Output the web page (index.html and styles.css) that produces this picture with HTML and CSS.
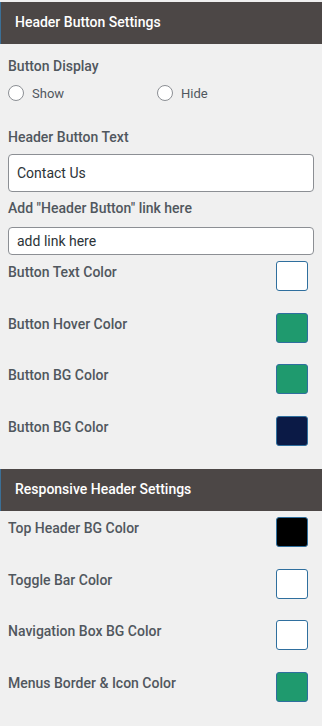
FILE: index.html
```html
<!DOCTYPE html>
<html lang="en">
<head>
<meta charset="utf-8">
<title>Header Button Settings</title>
<link rel="stylesheet" href="styles.css">
</head>
<body>
<div class="panel">
  <div class="section-title">Header Button Settings</div>
  <div class="section-body">
    <div class="field-label first">Button Display</div>
    <div class="radio-group">
      <label class="radio"><span class="radio-circle"></span><span class="radio-text">Show</span></label>
      <label class="radio"><span class="radio-circle"></span><span class="radio-text">Hide</span></label>
    </div>
    <div class="field-label spaced">Header Button Text</div>
    <div class="text-input tall">Contact Us</div>
    <div class="field-label tight">Add "Header Button" link here</div>
    <div class="text-input short">add link here</div>
    <div class="color-list top">
      <div class="color-row"><span class="color-label">Button Text Color</span><span class="swatch white"></span></div>
      <div class="color-row"><span class="color-label">Button Hover Color</span><span class="swatch green"></span></div>
      <div class="color-row"><span class="color-label">Button BG Color</span><span class="swatch green"></span></div>
      <div class="color-row"><span class="color-label">Button BG Color</span><span class="swatch navy"></span></div>
    </div>
  </div>
  <div class="section-title second">Responsive Header Settings</div>
  <div class="section-body">
    <div class="color-list second-list">
      <div class="color-row"><span class="color-label">Top Header BG Color</span><span class="swatch black"></span></div>
      <div class="color-row"><span class="color-label">Toggle Bar Color</span><span class="swatch white"></span></div>
      <div class="color-row"><span class="color-label">Navigation Box BG Color</span><span class="swatch white"></span></div>
      <div class="color-row"><span class="color-label">Menus Border &amp; Icon Color</span><span class="swatch green"></span></div>
    </div>
  </div>
</div>
</body>
</html>
```
FILE: styles.css
```css
html, body {
  margin: 0;
  padding: 0;
  background: #f0f0f0;
}
body {
  font-family: Roboto, "Liberation Sans", sans-serif;
  color: #50575e;
}
.panel {
  padding-top: 2px;
}
.section-title {
  height: 42px;
  box-sizing: border-box;
  background: #4c4746;
  border-left: 1px solid #3b6f96;
  color: #ffffff;
  font-size: 14px;
  font-weight: 500;
  display: flex;
  align-items: center;
  padding-left: 14px;
  padding-bottom: 2px;
}
.section-title.second {
  margin-top: 23px;
}
.section-body {
  padding: 0 8px;
}
.field-label {
  font-size: 14px;
  font-weight: 500;
  line-height: 20px;
  color: #50575e;
}
.field-label.first { margin-top: 12px; }
.field-label.spaced { margin-top: 26px; }
.field-label.tight { margin-top: 6px; }
.radio-group {
  margin-top: 9px;
  display: flex;
  height: 16px;
}
.radio {
  display: flex;
  align-items: center;
  width: 149px;
}
.radio-circle {
  width: 14px;
  height: 14px;
  border: 1px solid #8c8f94;
  border-radius: 50%;
  background: #ffffff;
  flex: none;
}
.radio-text {
  margin-left: 8px;
  font-size: 13px;
  color: #50575e;
}
.text-input {
  box-sizing: border-box;
  border: 1px solid #8c8f94;
  border-radius: 4px;
  background: #ffffff;
  color: #2c3338;
  font-size: 14px;
  padding-left: 8px;
  display: flex;
  align-items: center;
}
.text-input.tall {
  margin-top: 7px;
  height: 38px;
}
.text-input.short {
  margin-top: 9px;
  height: 28px;
}
.color-list {
  display: flex;
  flex-direction: column;
  gap: 21.7px;
}
.color-list.top { margin-top: 6px; }
.color-list.second-list { margin-top: 6px; }
.color-row {
  display: flex;
  justify-content: space-between;
  align-items: flex-start;
  height: 30px;
}
.color-label {
  font-size: 14px;
  font-weight: 500;
  line-height: 22px;
  color: #50575e;
}
.swatch {
  width: 32px;
  height: 30px;
  box-sizing: border-box;
  border: 1px solid #2f6f9e;
  border-radius: 3px;
  margin-right: 6px;
  flex: none;
}
.swatch.white { background: #ffffff; }
.swatch.green { background: #1f9a6e; }
.swatch.navy { background: #0b1a46; }
.swatch.black { background: #000000; }
```
